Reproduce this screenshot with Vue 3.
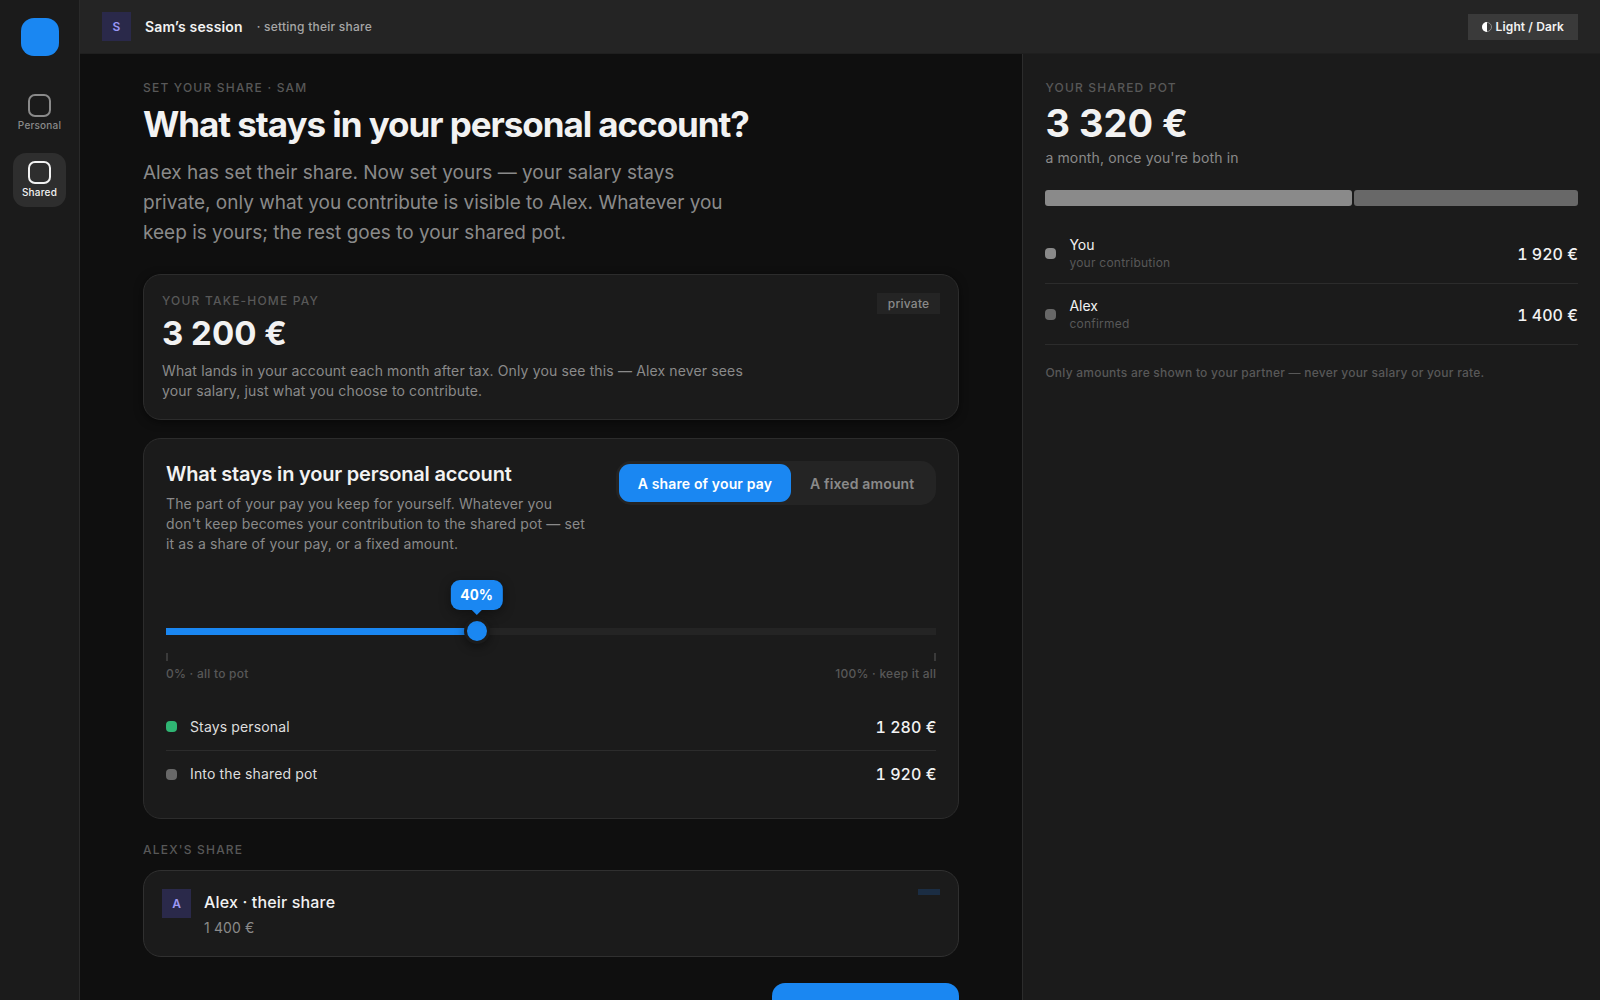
<template>
  <div class="shell">
    <nav class="rail" aria-label="Main">
      <div class="logo"></div>
      <a
        v-for="item in navItems"
        :key="item.label"
        href="#"
        class="rail-item"
        :class="{ active: item.active }"
      >
        <svg class="rail-icon" viewBox="0 0 23 23" aria-hidden="true">
          <rect x="1" y="1" width="21" height="21" rx="6" />
        </svg>
        <span>{{ item.label }}</span>
      </a>
    </nav>

    <div class="workspace">
      <header class="topbar">
        <span class="avatar">S</span>
        <strong class="session">Sam’s session</strong>
        <span class="session-note">· setting their share</span>
        <button type="button" class="theme-btn">
          <svg class="theme-icon" viewBox="0 0 10 10" aria-hidden="true">
            <circle cx="5" cy="5" r="4.5" />
            <path d="M5 0a5 5 0 0 0 0 10z" />
          </svg>
          Light / Dark
        </button>
      </header>

      <div class="columns">
        <main class="main">
          <p class="eyebrow">Set your share · Sam</p>
          <h1>What stays in your personal account?</h1>
          <p class="lead">
            Alex has set their share. Now set yours — your salary stays private, only what you
            contribute is visible to Alex. Whatever you keep is yours; the rest goes to your shared
            pot.
          </p>

          <section class="card pay-card">
            <div>
              <p class="eyebrow">Your take-home pay</p>
              <p class="pay">{{ euro(pay) }}</p>
              <p class="hint">
                What lands in your account each month after tax. Only you see this — Alex never sees
                your salary, just what you choose to contribute.
              </p>
            </div>
            <span class="tag">private</span>
          </section>

          <section class="card keep-card">
            <div class="keep-head">
              <div class="keep-text">
                <h2 id="keep-title">What stays in your personal account</h2>
                <p class="hint">
                  The part of your pay you keep for yourself. Whatever you don't keep becomes your
                  contribution to the shared pot — set it as a share of your pay, or a fixed amount.
                </p>
              </div>
              <div class="segmented">
                <button type="button" :class="{ on: mode === 'share' }" @click="mode = 'share'">
                  A share of your pay
                </button>
                <button type="button" :class="{ on: mode === 'fixed' }" @click="mode = 'fixed'">
                  A fixed amount
                </button>
              </div>
            </div>

            <div class="slider" :style="{ '--share': share / 100 }">
              <output class="bubble" for="share-range">{{ share }}%</output>
              <input
                id="share-range"
                v-model.number="share"
                type="range"
                min="0"
                max="100"
                aria-labelledby="keep-title"
              />
            </div>
            <div class="scale">
              <span>0% · all to pot</span>
              <span>100% · keep it all</span>
            </div>

            <ul class="split">
              <li>
                <i class="dot green"></i>
                <span>Stays personal</span>
                <b class="amount">{{ euro(personal) }}</b>
              </li>
              <li>
                <i class="dot dim"></i>
                <span>Into the shared pot</span>
                <b class="amount">{{ euro(contribution) }}</b>
              </li>
            </ul>
          </section>

          <p class="eyebrow partner-label">Alex's share</p>
          <section class="card partner-card">
            <span class="avatar">A</span>
            <div>
              <p class="partner-name">Alex · their share</p>
              <p class="partner-sum">{{ euro(partner) }}</p>
            </div>
            <span class="tag blue"></span>
          </section>

          <button type="button" class="submit" aria-label="Confirm your share"></button>
        </main>

        <aside class="pot">
          <p class="eyebrow">Your shared pot</p>
          <p class="total">{{ euro(total) }}</p>
          <p class="total-note">a month, once you're both in</p>
          <div class="bar">
            <div class="bar-you" :style="{ flexGrow: contribution }"></div>
            <div class="bar-partner" :style="{ flexGrow: partner }"></div>
          </div>
          <ul class="people">
            <li>
              <i class="dot light"></i>
              <div>
                <p class="who">You</p>
                <p class="status">your contribution</p>
              </div>
              <b class="amount">{{ euro(contribution) }}</b>
            </li>
            <li>
              <i class="dot dim"></i>
              <div>
                <p class="who">Alex</p>
                <p class="status">confirmed</p>
              </div>
              <b class="amount">{{ euro(partner) }}</b>
            </li>
          </ul>
          <p class="privacy">Only amounts are shown to your partner — never your salary or your rate.</p>
        </aside>
      </div>
    </div>
  </div>
</template>

<script setup>
import { computed, ref } from 'vue'

const navItems = [
  { label: 'Personal', active: false },
  { label: 'Shared', active: true }
]

const mode = ref('share')
const pay = 3200
const partner = 1400
const share = ref(40)

const personal = computed(() => Math.round((pay * share.value) / 100))
const contribution = computed(() => pay - personal.value)
const total = computed(() => contribution.value + partner)

// 3200 -> "3 200 €"
function euro(n) {
  return String(n).replace(/\B(?=(\d{3})+$)/g, '\u00a0') + '\u00a0€'
}
</script>

<style>
body {
  background: #0f0f0f;
}
</style>

<style scoped>
* {
  box-sizing: border-box;
}

p, h1, h2, ul {
  margin: 0;
  padding: 0;
}

li {
  list-style: none;
}

button {
  font-family: inherit;
  border: 0;
  cursor: pointer;
}

.shell {
  display: flex;
  height: 100vh;
  color: #f2f2f2;
  font-family: Inter, sans-serif;
  font-size: 14px;
  line-height: 20px;
}

/* Left rail */
.rail {
  flex: none;
  width: 80px;
  padding: 18px 0;
  background: #1b1b1b;
  border-right: 1px solid #2a2a2a;
  display: flex;
  flex-direction: column;
  align-items: center;
  gap: 13px;
}

.logo {
  width: 38px;
  height: 38px;
  margin-bottom: 17px;
  border-radius: 13px;
  background: #1a87f2;
}

.rail-item {
  width: 53px;
  height: 54px;
  padding-top: 8px;
  border-radius: 13px;
  display: flex;
  flex-direction: column;
  align-items: center;
  gap: 2px;
  color: #8a8a8a;
  font-size: 10px;
  font-weight: 500;
  line-height: 13px;
  letter-spacing: 0.02em;
  text-decoration: none;
}

.rail-item.active {
  background: #2e2e2e;
  color: #f2f2f2;
}

.rail-icon {
  width: 23px;
  height: 23px;
  fill: none;
  stroke: currentColor;
  stroke-width: 2;
}

.workspace {
  flex: 1;
  min-width: 0;
  display: flex;
  flex-direction: column;
}

/* Session bar */
.topbar {
  flex: none;
  height: 54px;
  padding: 0 22px;
  background: #242424;
  border-bottom: 1px solid #1f1f1f;
  display: flex;
  align-items: center;
  gap: 14px;
}

.avatar {
  flex: none;
  width: 29px;
  height: 29px;
  background: #2a294a;
  color: #9c98f5;
  font-size: 12px;
  font-weight: 600;
  line-height: 29px;
  text-align: center;
}

.session {
  font-size: 14px;
  font-weight: 600;
  letter-spacing: 0.01em;
}

.session-note {
  color: #a6a6a6;
  font-size: 12px;
  font-weight: 500;
  letter-spacing: 0.02em;
}

.theme-btn {
  height: 26px;
  margin-left: auto;
  padding: 0 14px;
  background: #3a3a3a;
  color: #f2f2f2;
  font-size: 12px;
  font-weight: 600;
  letter-spacing: 0.01em;
  display: flex;
  align-items: center;
  gap: 4px;
}

.theme-icon {
  width: 10px;
  height: 10px;
}

.theme-icon circle {
  fill: none;
  stroke: #8a8a8a;
}

.theme-icon path {
  fill: #ffffff;
}

.columns {
  flex: 1;
  min-height: 0;
  display: grid;
  grid-template-columns: 62fr 38fr;
}

.main {
  min-height: 0;
  padding: 24px 63px;
  background: #0f0f0f;
  overflow-y: auto;
  scrollbar-width: none;
}

.eyebrow {
  color: #585858;
  font-size: 12px;
  font-weight: 500;
  line-height: 20px;
  letter-spacing: 0.1em;
  text-transform: uppercase;
}

h1 {
  margin-top: 6px;
  font-size: 35px;
  font-weight: 700;
  line-height: 40px;
  letter-spacing: -0.03em;
}

.lead {
  max-width: 600px;
  margin: 14px 0 26px;
  color: #8a8a8a;
  font-size: 19px;
  line-height: 30px;
}

.card {
  background: #1b1b1b;
  border: 1px solid #2c2c2c;
  border-radius: 18px;
}

.pay-card {
  padding: 18px;
  display: flex;
  justify-content: space-between;
  align-items: flex-start;
  box-shadow: 0 2px 8px rgba(0, 0, 0, 0.5);
}

.pay-card .eyebrow {
  line-height: 16px;
}

.pay {
  margin: 4px 0 8px;
  font-size: 33px;
  font-weight: 700;
  line-height: 40px;
}

.hint {
  max-width: 600px;
  color: #8a8a8a;
  letter-spacing: 0.01em;
}

.tag {
  padding: 3px 11px;
  background: #242424;
  color: #8a8a8a;
  font-size: 12px;
  font-weight: 500;
  line-height: 15px;
  letter-spacing: 0.02em;
}

.tag.blue {
  margin-left: auto;
  background: #1b2d43;
}

/* Share slider card */
.keep-card {
  margin-top: 18px;
  padding: 22px 22px 21px;
}

.keep-head {
  display: flex;
  justify-content: space-between;
  align-items: flex-start;
  gap: 24px;
}

.keep-text {
  max-width: 422px;
}

h2 {
  margin-bottom: 7px;
  font-size: 20px;
  font-weight: 600;
  line-height: 26px;
  letter-spacing: -0.01em;
}

.segmented {
  flex: none;
  display: flex;
  padding: 3px;
  border-radius: 15px;
  background: #242424;
}

.segmented button {
  height: 38px;
  padding: 0 19px;
  border-radius: 11px;
  background: transparent;
  color: #8a8a8a;
  font-size: 14px;
  font-weight: 600;
  letter-spacing: 0.01em;
}

.segmented button.on {
  background: #1a87f2;
  color: #ffffff;
}

.slider {
  position: relative;
  margin-top: 64px;
  height: 26px;
}

.slider input {
  display: block;
  width: 100%;
  height: 26px;
  margin: 0;
  appearance: none;
  background: transparent;
}

.slider input::-webkit-slider-runnable-track {
  height: 7px;
  background: linear-gradient(
    to right,
    #1a87f2 calc(var(--share) * 100%),
    #242424 calc(var(--share) * 100%)
  );
}

.slider input::-webkit-slider-thumb {
  appearance: none;
  width: 26px;
  height: 26px;
  margin-top: -10px;
  border: 3px solid #1b1b1b;
  border-radius: 50%;
  background: #1a87f2;
  box-shadow: 0 3px 10px rgba(0, 0, 0, 0.4);
}

/* The bubble rides above the thumb, whose centre travels 13px in from each end */
.bubble {
  position: absolute;
  bottom: 34px;
  left: calc(13px + (100% - 26px) * var(--share));
  transform: translateX(-50%);
  padding: 0 10px;
  border-radius: 9px;
  background: #1a87f2;
  color: #ffffff;
  font-size: 14px;
  font-weight: 700;
  font-variant-numeric: tabular-nums;
  line-height: 30px;
  box-shadow: 0 3px 12px rgba(0, 0, 0, 0.4);
}

.bubble::after {
  content: '';
  position: absolute;
  top: 100%;
  left: 50%;
  margin-left: -5px;
  border: 5px solid transparent;
  border-top-color: #1a87f2;
  border-bottom: 0;
}

.scale {
  margin-top: 9px;
  display: flex;
  justify-content: space-between;
  color: #585858;
  font-size: 12px;
  font-weight: 500;
  line-height: 18px;
  letter-spacing: 0.02em;
}

.scale span::before {
  content: '';
  display: block;
  width: 2px;
  height: 8px;
  margin-bottom: 4px;
  background: #3a3a3a;
}

.scale span:last-child::before {
  margin-left: auto;
}

.split {
  margin-top: 20px;
}

.split li {
  display: flex;
  align-items: center;
  gap: 13px;
  height: 47px;
  color: #dedede;
  letter-spacing: 0.01em;
}

.split li + li {
  border-top: 1px solid #2c2c2c;
}

.dot {
  flex: none;
  width: 11px;
  height: 11px;
  border-radius: 4px;
}

.dot.green {
  background: #2fb573;
}

.dot.light {
  background: #8a8a8a;
}

.dot.dim {
  background: #686868;
}

.amount {
  margin-left: auto;
  color: #f2f2f2;
  font-size: 16px;
  font-weight: 500;
  font-variant-numeric: tabular-nums;
  letter-spacing: normal;
}

/* Partner */
.partner-label {
  margin: 21px 0 10px;
}

.partner-card {
  padding: 18px;
  display: flex;
  align-items: flex-start;
  gap: 13px;
  border-color: #303030;
}

.partner-name {
  font-size: 16px;
  font-weight: 500;
  line-height: 26px;
  letter-spacing: 0.01em;
}

.partner-sum {
  margin-top: 3px;
  color: #8a8a8a;
  letter-spacing: 0.01em;
}

.submit {
  display: block;
  width: 187px;
  height: 52px;
  margin: 26px 0 0 auto;
  border-radius: 13px;
  background: #1a87f2;
}

/* Shared pot summary */
.pot {
  padding: 24px 22px;
  background: #1b1b1b;
  border-left: 1px solid #2c2c2c;
}

.total {
  margin-top: 3px;
  font-size: 38px;
  font-weight: 700;
  line-height: 44px;
}

.total-note {
  margin-top: 3px;
  color: #8a8a8a;
  letter-spacing: 0.01em;
}

.bar {
  display: flex;
  gap: 2px;
  height: 16px;
  margin: 22px 0 17px;
}

.bar div {
  flex-basis: 0;
  border-radius: 3px;
}

.bar-you {
  background: #8a8a8a;
}

.bar-partner {
  background: #686868;
}

.people li {
  display: flex;
  align-items: center;
  gap: 13px;
  padding: 12px 0 11px;
  border-bottom: 1px solid #2c2c2c;
}

.who {
  line-height: 19px;
}

.status {
  color: #585858;
  font-size: 12px;
  line-height: 18px;
  letter-spacing: 0.02em;
}

.privacy {
  margin-top: 18px;
  color: #585858;
  font-size: 12px;
  font-weight: 500;
  letter-spacing: 0.02em;
}
</style>
